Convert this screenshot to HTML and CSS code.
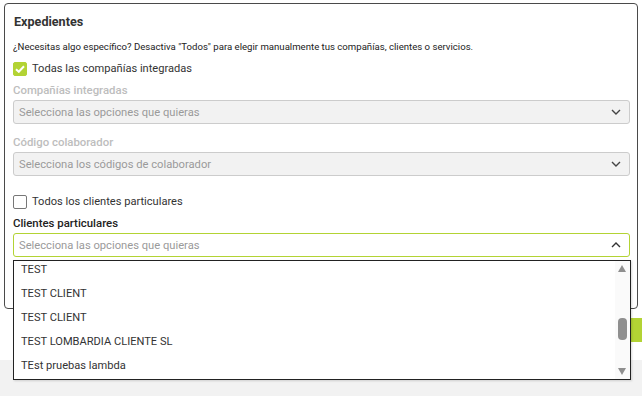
FILE: index.html
```html
<!DOCTYPE html>
<html>
<head>
    <meta charset="UTF-8">
    <title>Expedientes</title>
    <link rel="stylesheet" href="styles.css">
</head>

<body>
    <div class="page">
        <div class="card">
            <h3 class="card-title">Expedientes</h3>
            <p class="hint">¿Necesitas algo específico? Desactiva "Todos" para elegir manualmente tus compañías, clientes o servicios.</p>

            <label class="check">
                <span class="box checked">
                    <svg width="10" height="8" viewBox="0 0 10 8"><path d="M1 4.2 L3.8 6.8 L9 1.2" fill="none" stroke="#fff" stroke-width="2"/></svg>
                </span>
                Todas las compañías integradas
            </label>

            <div class="field disabled">
                <div class="field-label">Compañías integradas</div>
                <div class="select">
                    <span>Selecciona las opciones que quieras</span>
                    <svg class="chev" width="10" height="6" viewBox="0 0 10 6"><path d="M1 1 L5 5 L9 1" fill="none" stroke="#444" stroke-width="1.4"/></svg>
                </div>
            </div>

            <div class="field disabled">
                <div class="field-label">Código colaborador</div>
                <div class="select">
                    <span>Selecciona los códigos de colaborador</span>
                    <svg class="chev" width="10" height="6" viewBox="0 0 10 6"><path d="M1 1 L5 5 L9 1" fill="none" stroke="#444" stroke-width="1.4"/></svg>
                </div>
            </div>

            <label class="check second">
                <span class="box"></span>
                Todos los clientes particulares
            </label>

            <div class="field open">
                <div class="field-label">Clientes particulares</div>
                <div class="select">
                    <span>Selecciona las opciones que quieras</span>
                    <svg class="chev" width="10" height="6" viewBox="0 0 10 6"><path d="M1 5 L5 1 L9 5" fill="none" stroke="#333" stroke-width="1.4"/></svg>
                </div>
            </div>
        </div>

        <div class="actions">
            <div class="btn-save"></div>
        </div>
        <div class="footer"></div>

        <!-- lista desplegable abierta -->
        <div class="dropdown">
            <ul class="options">
                <li>TEST</li>
                <li>TEST CLIENT</li>
                <li>TEST CLIENT</li>
                <li>TEST LOMBARDIA CLIENTE SL</li>
                <li>TEst pruebas lambda</li>
            </ul>
            <div class="scrollbar">
                <span class="arrow up"></span>
                <span class="thumb"></span>
                <span class="arrow down"></span>
            </div>
        </div>
    </div>
</body>
</html>
```

FILE: styles.css
```css
html, body { margin: 0; padding: 0; background: #fff; overflow: hidden; }
body { font-family: Roboto, "Liberation Sans", sans-serif; color: #333; }
.page { position: relative; height: 396px; display: flex; flex-direction: column; }

.card {
    margin: 3px 4px 0 4px;
    height: 306px;
    box-sizing: border-box;
    border: 1px solid #4a4a4a;
    border-radius: 4px;
    padding: 10px 7px 0 8px;
    display: flex;
    flex-direction: column;
}
.card-title { margin: 0 0 0 1px; font-size: 12.6px; line-height: 16px; font-weight: 700; color: #333; }
.hint { margin: 10px 0 0 0; font-size: 9.6px; line-height: 14px; color: #222; }

.check { display: flex; align-items: center; gap: 5px; font-size: 11.1px; line-height: 16px; color: #333; margin-top: 7px; }
.check.second { margin-top: 18px; }
.box {
    width: 12px; height: 12px;
    border: 1px solid #777;
    border-radius: 2px;
    display: flex; align-items: center; justify-content: center;
    background: #fff;
}
.box.checked { background: #b3d334; border-color: #b3d334; }

.field { margin-top: 6px; }
.field + .field { margin-top: 11px; }
.field-label { font-size: 11.4px; line-height: 14px; font-weight: 500; color: #222; }
.field.disabled .field-label { color: #bdbdbd; }
.select {
    margin-top: 3px;
    height: 24px;
    box-sizing: border-box;
    border: 1px solid #ccc;
    border-radius: 3px;
    padding: 0 8px 0 5px;
    display: flex; align-items: center; justify-content: space-between;
    font-size: 11.2px;
    color: #9a9a9a;
}
.field.disabled .select { background: #f2f2f2; }
.field.open { margin-top: 6px; }
.field.open .select { border-color: #b3d334; background: #fff; }

.actions { height: 51px; display: flex; justify-content: flex-end; align-items: flex-start; }
.btn-save { margin-top: 9px; width: 11px; height: 24px; background: #b3d334; }
.footer { flex: 1; background: #f2f2f2; }

.dropdown {
    position: absolute;
    left: 13px; top: 260px;
    width: 618px; height: 120px;
    box-sizing: border-box;
    border: 1px solid #222;
    background: #fff;
    overflow: hidden;
    box-shadow: 1px 1px 2px rgba(0,0,0,0.15);
}
.options { list-style: none; margin: -3px 0 0 0; padding: 0; }
.options li { height: 24px; line-height: 24px; padding-left: 7px; font-size: 11.1px; color: #333; }

.scrollbar {
    position: absolute;
    right: 0; top: 0; bottom: 0;
    width: 15px;
    background: #fafafa;
}
.arrow { position: absolute; left: 3px; width: 0; height: 0; border-left: 4.5px solid transparent; border-right: 4.5px solid transparent; }
.arrow.up { top: 4px; border-bottom: 7px solid #8f8f8f; }
.arrow.down { bottom: 4px; border-top: 7px solid #8f8f8f; }
.thumb { position: absolute; left: 3px; top: 57px; width: 9px; height: 22px; border-radius: 4px; background: #8f8f8f; }
```
